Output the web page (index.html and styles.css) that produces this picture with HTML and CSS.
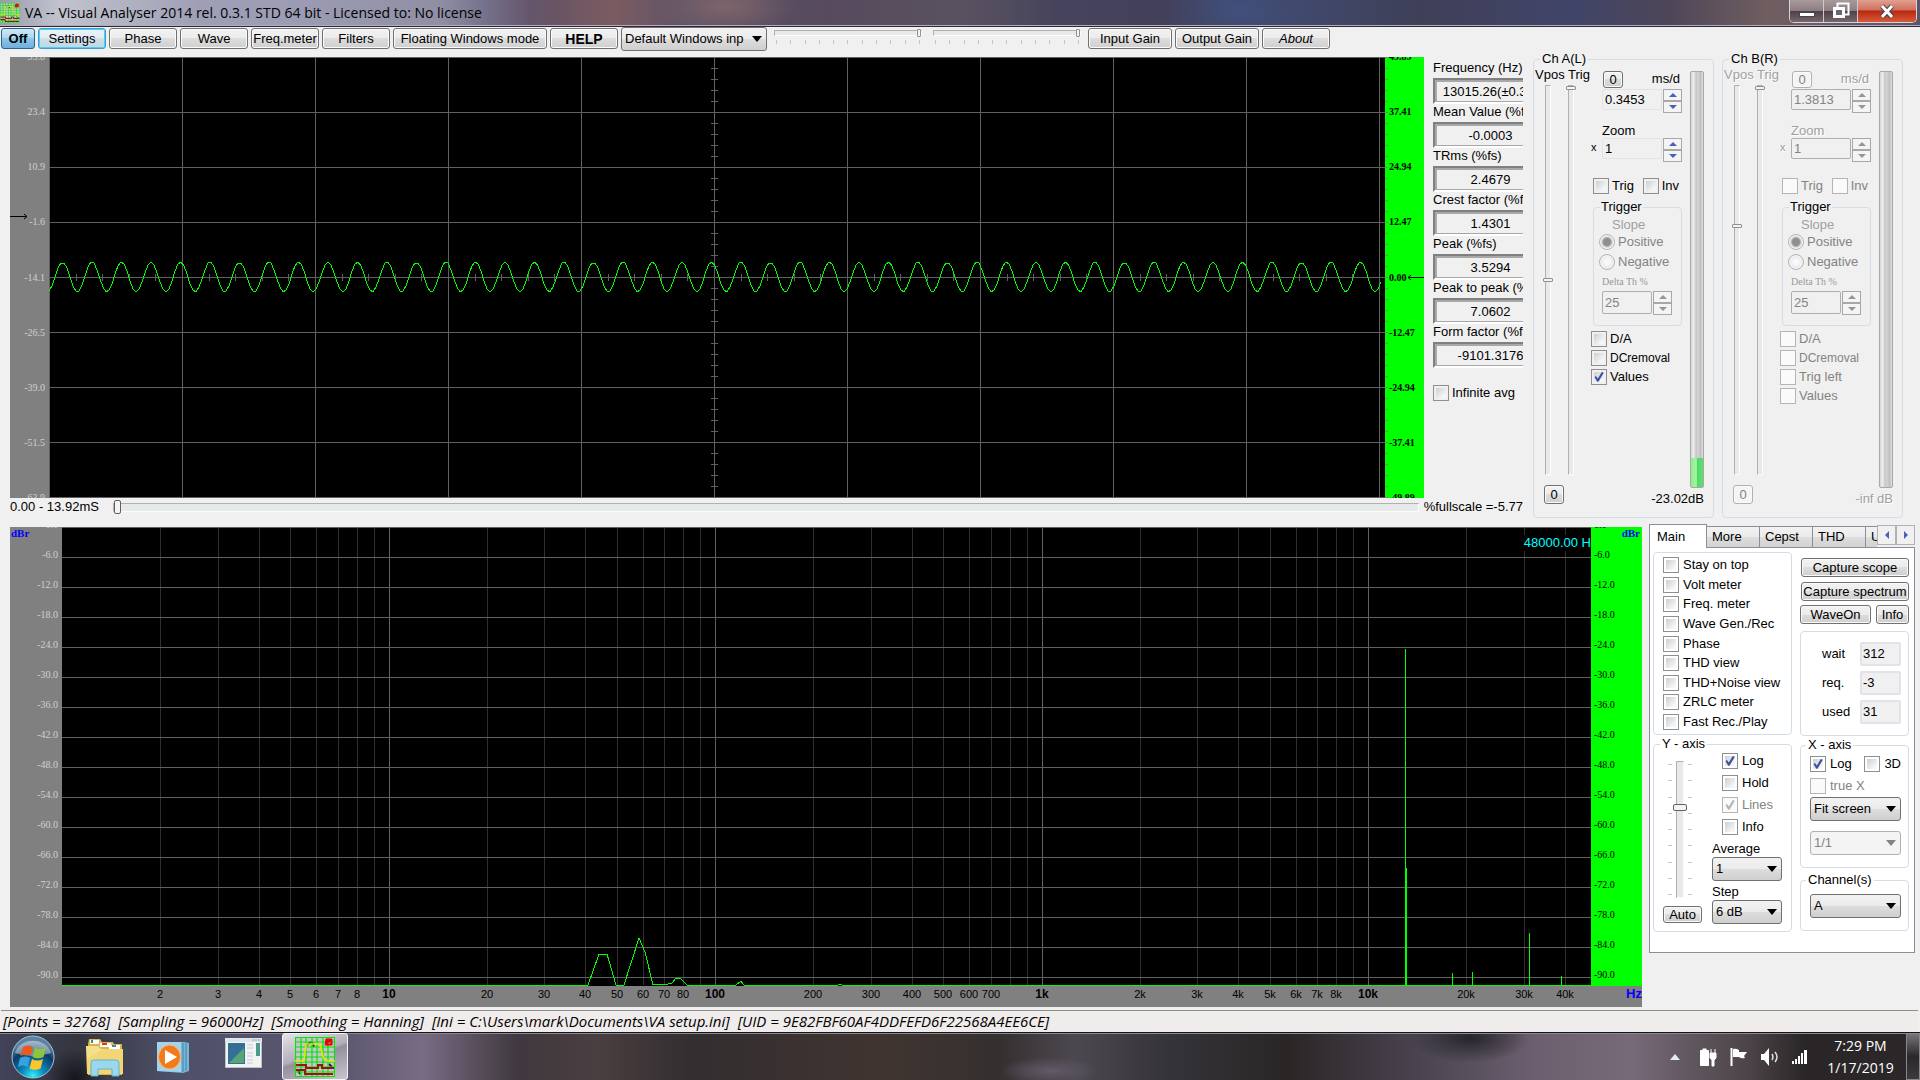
FILE: index.html
```html
<!DOCTYPE html>
<html lang="en">
<head>
    <meta charset="UTF-8">
    <meta name="viewport" content="width=device-width, initial-scale=1.0">
    <title>VA -- Visual Analyser 2014</title>
    <link rel="stylesheet" href="styles.css">
</head>
<body>
    <svg class="defs" width="0" height="0">
        <symbol id="va-icon" viewBox="0 0 40 40">
            <rect width="40" height="40" fill="#c8c4ce"/>
            <path d="M12 8l4-3M17 5l2 5M34 27l3 3M3 33l2 4" stroke="#123" stroke-width="2"/>
            <path d="M.5 0v40M6 0v40M11 0v40M17 0v40M22 0v40M28 0v40M33 0v40M39.5 0v40M0 .5h40M0 5h40M0 10h40M0 15h40M0 20h40M0 25h40M0 30h40M0 35h40M0 39.5h40" stroke="#00e800" stroke-width="1.2"/>
            <path d="M0 24h9l2-17h14l3 13 4 4h8" fill="none" stroke="#e6e600" stroke-width="1.6"/>
            <path d="M1 28h10v3h12v-3h4v3h12M1 33h9v4h28" fill="none" stroke="#a01010" stroke-width="2"/>
            <path d="M31 2h6v3h-4v3h-3zM32 8h5V5" fill="#e00" stroke="#e00"/>
        </symbol>
    </svg>

    <header class="titlebar">
        <svg class="app-icon"><use href="#va-icon"/></svg>
        <h1>VA -- Visual Analyser 2014 rel. 0.3.1 STD 64 bit - Licensed to: No license</h1>
        <div class="caption-buttons">
            <button aria-label="Minimize"><svg width="18" height="22"><rect x="1.5" y="12.500" width="15" height="4" fill="#fff" stroke="#445"/></svg></button>
            <button aria-label="Restore"><svg width="18" height="22"><path d="M5.500 3.500h11v11h-11z" fill="none" stroke="#fff" stroke-width="2"/><path d="M2.500 8.500h9v8h-9z" fill="#667" stroke="#fff" stroke-width="3"/></svg></button>
            <button class="close" aria-label="Close"><svg width="18" height="22"><path d="M4 6l10 11M14 6L4 17" stroke="#445" stroke-width="5"/><path d="M4 6l10 11M14 6L4 17" stroke="#fff" stroke-width="3"/></svg></button>
        </div>
    </header>

    <main>
        <div class="toolbar">
            <button class="off">Off</button>
            <button class="focused">Settings</button>
            <button>Phase</button>
            <button>Wave</button>
            <button>Freq.meter</button>
            <button>Filters</button>
            <button class="wide">Floating Windows mode</button>
            <button class="help">HELP</button>
            <span class="combo device"><select aria-label="Input device"><option>Default Windows input device</option></select></span>
            <div class="gain">
                <input type="range" value="100" aria-label="Input gain">
                <div class="ticks"><i></i><i></i><i></i><i></i><i></i><i></i><i></i><i></i><i></i><i></i><i></i></div>
            </div>
            <div class="gain">
                <input type="range" value="100" aria-label="Output gain">
                <div class="ticks"><i></i><i></i><i></i><i></i><i></i><i></i><i></i><i></i><i></i><i></i><i></i></div>
            </div>
            <button class="gain-button">Input Gain</button>
            <button class="gain-button">Output Gain</button>
            <button class="about">About</button>
        </div>

        <div class="upper">
            <div class="scope-area">
                <div class="scope">
                    <div class="scale left">
                        <ul id="scopeLeft"></ul>
                        <svg class="trigger-arrow" width="18" height="7"><path d="M0 3.500h17M14 1l3 2.500L14 6" fill="none" stroke="#000"/></svg>
                    </div>
                    <svg class="plot" id="scopePlot" viewBox="0 0 1336 441" preserveAspectRatio="none"></svg>
                    <div class="scale right">
                        <svg class="scale-ticks" id="scopeTicks" width="4" height="441"></svg>
                        <ul id="scopeRight"></ul>
                        <svg class="zero-arrow" width="17" height="7"><path d="M17 3.500H1M4 1L1 3.500 4 6" fill="none" stroke="#000"/></svg>
                    </div>
                </div>
                <div class="measures">
                    <label for="m1">Frequency (Hz)</label><output id="m1">13015.26(±0.36)</output>
                    <label for="m2">Mean Value (%fs)</label><output id="m2">-0.0003</output>
                    <label for="m3">TRms (%fs)</label><output id="m3">2.4679</output>
                    <label for="m4">Crest factor (%fs)</label><output id="m4">1.4301</output>
                    <label for="m5">Peak (%fs)</label><output id="m5">3.5294</output>
                    <label for="m6">Peak to peak (%fs)</label><output id="m6">7.0602</output>
                    <label for="m7">Form factor (%fs)</label><output id="m7">-9101.3176</output>
                    <label class="check"><input type="checkbox">Infinite avg</label>
                </div>
                <div class="time-row">
                    <label for="timePos">0.00 - 13.92mS</label>
                    <input type="range" id="timePos" value="0">
                    <span>%fullscale =-5.77</span>
                </div>
            </div>

            <fieldset class="channel">
                <legend>Ch A(L)</legend>
                <div class="channel-body">
                    <div class="positions">
                        <div class="caption">Vpos Trig</div>
                        <div class="sliders">
                            <input type="range" value="50" aria-label="Vpos A">
                            <input type="range" value="0" aria-label="Trig A">
                        </div>
                        <button class="zero">0</button>
                    </div>
                    <div class="settings">
                        <div class="columns">
                            <div class="controls">
                                <div class="line time-head"><button class="zero">0</button><label for="msA">ms/d</label></div>
                                <div class="line spin"><input type="text" id="msA" value="0.3453"><span class="updown"><button aria-label="Up"></button><button aria-label="Down"></button></span></div>
                                <label class="zoom-label" for="zoomA">Zoom</label>
                                <div class="line spin"><span class="times">x</span><input type="text" id="zoomA" value="1"><span class="updown"><button aria-label="Up"></button><button aria-label="Down"></button></span></div>
                                <div class="line pair">
                                    <label class="check"><input type="checkbox">Trig</label>
                                    <label class="check"><input type="checkbox">Inv</label>
                                </div>
                                <fieldset class="trigger">
                                    <legend>Trigger</legend>
                                    <div class="slope">Slope</div>
                                    <label class="check"><input type="radio" name="slopeA" checked disabled>Positive</label>
                                    <label class="check"><input type="radio" name="slopeA" disabled>Negative</label>
                                    <label class="delta" for="deltaA">Delta Th %</label>
                                    <div class="line spin"><input type="text" id="deltaA" value="25" disabled><span class="updown"><button aria-label="Up" disabled></button><button aria-label="Down" disabled></button></span></div>
                                </fieldset>
                                <div class="options">
                                    <label class="check"><input type="checkbox">D/A</label>
                                    <label class="check small"><input type="checkbox">DCremoval</label>
                                    <label class="check"><input type="checkbox" checked>Values</label>
                                </div>
                            </div>
                            <div class="level"><div class="level-fill" style="height: 7%"></div></div>
                        </div>
                        <div class="db">-23.02dB</div>
                    </div>
                </div>
            </fieldset>

            <fieldset class="channel inactive">
                <legend>Ch B(R)</legend>
                <div class="channel-body">
                    <div class="positions">
                        <div class="caption">Vpos Trig</div>
                        <div class="sliders">
                            <input type="range" value="36" aria-label="Vpos B" disabled>
                            <input type="range" value="0" aria-label="Trig B" disabled>
                        </div>
                        <button class="zero" disabled>0</button>
                    </div>
                    <div class="settings">
                        <div class="columns">
                            <div class="controls">
                                <div class="line time-head"><button class="zero" disabled>0</button><label for="msB">ms/d</label></div>
                                <div class="line spin"><input type="text" id="msB" value="1.3813" disabled><span class="updown"><button aria-label="Up" disabled></button><button aria-label="Down" disabled></button></span></div>
                                <label class="zoom-label" for="zoomB">Zoom</label>
                                <div class="line spin"><span class="times">x</span><input type="text" id="zoomB" value="1" disabled><span class="updown"><button aria-label="Up" disabled></button><button aria-label="Down" disabled></button></span></div>
                                <div class="line pair">
                                    <label class="check"><input type="checkbox" disabled>Trig</label>
                                    <label class="check"><input type="checkbox" disabled>Inv</label>
                                </div>
                                <fieldset class="trigger">
                                    <legend>Trigger</legend>
                                    <div class="slope">Slope</div>
                                    <label class="check"><input type="radio" name="slopeB" checked disabled>Positive</label>
                                    <label class="check"><input type="radio" name="slopeB" disabled>Negative</label>
                                    <label class="delta" for="deltaB">Delta Th %</label>
                                    <div class="line spin"><input type="text" id="deltaB" value="25" disabled><span class="updown"><button aria-label="Up" disabled></button><button aria-label="Down" disabled></button></span></div>
                                </fieldset>
                                <div class="options">
                                    <label class="check"><input type="checkbox" disabled>D/A</label>
                                    <label class="check small"><input type="checkbox" disabled>DCremoval</label>
                                    <label class="check"><input type="checkbox" disabled>Trig left</label>
                                    <label class="check"><input type="checkbox" disabled>Values</label>
                                </div>
                            </div>
                            <div class="level"></div>
                        </div>
                        <div class="db">-inf dB</div>
                    </div>
                </div>
            </fieldset>
        </div>

        <div class="lower">
            <div class="spectrum">
                <div class="scale left">
                    <ul id="specLeft"></ul>
                    <b class="unit">dBr</b>
                </div>
                <div class="spectrum-plot">
                    <svg class="plot" id="specPlot" viewBox="0 0 1529 459" preserveAspectRatio="none"></svg>
                    <span class="readout">48000.00 H</span>
                </div>
                <div class="scale right">
                    <ul id="specRight"></ul>
                    <b class="unit">dBr</b>
                </div>
                <div class="freq-axis">
                    <div class="freq-labels" id="freqLabels"></div>
                    <b>Hz</b>
                </div>
            </div>

            <div class="panel">
                <div class="tabs" role="tablist">
                    <button class="tab active" role="tab">Main</button>
                    <button class="tab" role="tab">More</button>
                    <button class="tab" role="tab">Cepst</button>
                    <button class="tab" role="tab">THD</button>
                    <button class="tab cut" role="tab">U</button>
                    <button class="scroll prev" aria-label="Previous tabs"></button>
                    <button class="scroll next" aria-label="Next tabs"></button>
                </div>
                <div class="page">
                    <div class="page-left">
                        <div class="box views">
                            <label class="check"><input type="checkbox">Stay on top</label>
                            <label class="check"><input type="checkbox">Volt meter</label>
                            <label class="check"><input type="checkbox">Freq. meter</label>
                            <label class="check"><input type="checkbox">Wave Gen./Rec</label>
                            <label class="check"><input type="checkbox">Phase</label>
                            <label class="check"><input type="checkbox">THD view</label>
                            <label class="check"><input type="checkbox">THD+Noise view</label>
                            <label class="check"><input type="checkbox">ZRLC meter</label>
                            <label class="check"><input type="checkbox">Fast Rec./Play</label>
                        </div>
                        <fieldset class="y-axis">
                            <legend>Y - axis</legend>
                            <div class="axis-body">
                                <div class="y-scale">
                                    <div class="y-slider">
                                        <div class="ticks"><i></i><i></i><i></i><i></i><i></i><i></i><i></i><i></i><i></i></div>
                                        <input type="range" value="33" aria-label="Y scale">
                                        <div class="ticks"><i></i><i></i><i></i><i></i><i></i><i></i><i></i><i></i><i></i></div>
                                    </div>
                                    <button>Auto</button>
                                </div>
                                <div class="y-options">
                                    <label class="check"><input type="checkbox" checked>Log</label>
                                    <label class="check"><input type="checkbox">Hold</label>
                                    <label class="check"><input type="checkbox" checked disabled>Lines</label>
                                    <label class="check"><input type="checkbox">Info</label>
                                    <label class="field" for="average">Average</label>
                                    <span class="combo"><select id="average"><option>1</option></select></span>
                                    <label class="field" for="step">Step</label>
                                    <span class="combo"><select id="step"><option>6 dB</option></select></span>
                                </div>
                            </div>
                        </fieldset>
                    </div>
                    <div class="page-right">
                        <button>Capture scope</button>
                        <button>Capture spectrum</button>
                        <div class="line split"><button>WaveOn</button><button>Info</button></div>
                        <div class="box counters">
                            <label for="wait">wait</label><input type="text" id="wait" value="312" readonly>
                            <label for="req">req.</label><input type="text" id="req" value="-3" readonly>
                            <label for="used">used</label><input type="text" id="used" value="31" readonly>
                        </div>
                        <fieldset class="x-axis">
                            <legend>X - axis</legend>
                            <div class="line pair">
                                <label class="check"><input type="checkbox" checked>Log</label>
                                <label class="check"><input type="checkbox">3D</label>
                            </div>
                            <label class="check"><input type="checkbox" disabled>true X</label>
                            <span class="combo"><select aria-label="Fit"><option>Fit screen</option></select></span>
                            <span class="combo disabled"><select aria-label="Ratio" disabled><option>1/1</option></select></span>
                        </fieldset>
                        <fieldset class="channels">
                            <legend>Channel(s)</legend>
                            <span class="combo"><select aria-label="Channel"><option>A</option></select></span>
                        </fieldset>
                    </div>
                </div>
            </div>
        </div>

        <footer class="status">
            <span>[Points = 32768]</span>
            <span>[Sampling = 96000Hz]</span>
            <span>[Smoothing = Hanning]</span>
            <span>[Ini = C:\Users\mark\Documents\VA setup.ini]</span>
            <span>[UID = 9E82FBF60AF4DDFEFD6F22568A4EE6CE]</span>
        </footer>
    </main>

    <nav class="taskbar">
        <button class="start" aria-label="Start">
            <svg width="44" height="44" viewBox="0 0 44 44">
                <defs>
                    <radialGradient id="orb" cx=".5" cy=".95" r=".8">
                        <stop offset="0" stop-color="#2ff0ff"/><stop offset=".35" stop-color="#0a86b8"/><stop offset=".75" stop-color="#0d3a66"/><stop offset="1" stop-color="#5c83a4"/>
                    </radialGradient>
                </defs>
                <circle cx="22" cy="22" r="21" fill="url(#orb)" stroke="#9fc3d6"/>
                <path d="M4 18a18.500 16 0 0 1 36 0q-18 6-36 0z" fill="#fff" opacity=".4"/>
                <path d="M12 12q5-3 10 0l-2.500 9q-5-3-10 0z" fill="#ea5a1c"/>
                <path d="M24 12.500q5 3 11 0l-2.500 9.500q-6 2.500-11 0z" fill="#8cc63e"/>
                <path d="M9 23q5-3 10 0l-2.500 9q-5-3-9.500 0z" fill="#3aa0e0"/>
                <path d="M21 24q5 3 11 0l-2.500 9.500q-6 2.500-11 0z" fill="#fdc72c"/>
            </svg>
        </button>
        <button class="task explorer" aria-label="Windows Explorer">
            <svg width="40" height="40" viewBox="0 0 40 40">
                <path d="M3 7l1-5h11l2 3h11l1 2h8v31H3z" fill="#d9b44a"/>
                <path d="M5 3h9v4H5zM15 6h11v4H15zM24 8h11v4H24z" fill="#fff"/>
                <path d="M6 3h2v3H6z" fill="#2a9a4a"/><path d="M17 6h5v2h-5z" fill="#d33"/><path d="M27 8h4v2h-4z" fill="#38c"/>
                <path d="M1 9h12l3 3h22v25H2z" fill="#f4e08a"/>
                <path d="M2 22L18 12h20v25H2z" fill="#efd26a" opacity=".7"/>
                <path d="M6 39V26q0-3 3-3h22q3 0 3 3v13h-7v-7H13v7z" fill="#9bd8ee" stroke="#5eb2d4"/>
            </svg>
        </button>
        <button class="task player" aria-label="Media Player">
            <svg width="34" height="34" viewBox="0 0 34 34">
                <path d="M1 2h27l5 1v28l-6 2L1 31z" fill="#79b6d8"/>
                <path d="M1 2h24v30L1 31z" fill="#a4d4ec"/>
                <path d="M27 3v29M30 3v28" stroke="#3f86b0"/>
                <ellipse cx="13.500" cy="17" rx="11" ry="12" fill="#f27a1a" stroke="#ffb777"/>
                <path d="M9 10l12 7-12 7z" fill="#fff"/>
            </svg>
        </button>
        <button class="task window" aria-label="Program">
            <svg width="38" height="32" viewBox="0 0 38 32">
                <path d="M.5.5h36v29H.5z" fill="#f2f4f4" stroke="#b9c4cc"/>
                <path d="M0 0h37v4H0z" fill="#dfe6ea"/><path d="M27 2h8" stroke="#8a99a5" stroke-dasharray="2 1"/>
                <path d="M3 5h17v21H3z" fill="#356f96"/><path d="M4 25L19 10v15z" fill="#56a577"/>
                <path d="M22 7h6M22 10h6M22 15h6M22 18h6M22 22h6M22 25h6" stroke="#c8ccd0"/>
                <path d="M31 5h4v13h-4z" fill="#4b9a8c"/>
            </svg>
        </button>
        <button class="task current" aria-label="Visual Analyser"><svg width="40" height="40"><use href="#va-icon"/></svg></button>
        <div class="tray">
            <svg width="10" height="6"><path d="M0 6l5-6 5 6z" fill="#e6edf4"/></svg>
            <svg width="20" height="20"><path d="M2.500 3.500h8v15h-8z" fill="#fff" stroke="#fff"/><path d="M4.500 1.500h4v2h-4z" fill="#fff"/><path d="M12 6h6v5l-2 2v6h-2v-6l-2-2zM13 2v4M17 2v4" fill="#fff" stroke="#fff"/></svg>
            <svg width="18" height="20"><path d="M1.500 1v18" stroke="#fff" stroke-width="2"/><path d="M3 2q3-1 6 1v2h8l-3 4 1 2q-4 1-6-1H3z" fill="#fff"/></svg>
            <svg width="20" height="20"><path d="M1 7h3l5-6v18l-5-6H1z" fill="#fff"/><path d="M12 7q2 3 0 6M15 5q4 5 0 10" fill="none" stroke="#ddd" stroke-width="1.500"/></svg>
            <svg width="16" height="16"><path d="M0 12h2v3H0zM3 10h2v5H3zM6 7h2v8H6zM9 4h2v11H9zM12 1h3v14h-3z" fill="#fff"/></svg>
        </div>
        <div class="clock"><span>7:29 PM</span><span>1/17/2019</span></div>
        <button class="show-desktop" aria-label="Show desktop"></button>
    </nav>

    <script src="script.js"></script>
</body>
</html>
```
FILE: styles.css
```css
* {
    box-sizing: border-box;
}
body {
    margin: 0;
    min-height: 100vh;
    display: flex;
    flex-direction: column;
    background: #f0f0f0;
    color: #000;
    font: 13px/16px "Liberation Sans", Arial, sans-serif;
}
.defs {
    position: absolute;
}
button, input, select {
    font: inherit;
    color: inherit;
    margin: 0;
}
ul {
    list-style: none;
    margin: 0;
    padding: 0;
}
fieldset {
    margin: 0;
    padding: 0;
    min-width: 0;
    border: 1px solid #d3dde6;
    border-radius: 4px;
}
legend {
    margin-left: 6px;
    padding: 0 2px;
}
.line {
    display: flex;
}

/* Title bar */
.titlebar {
    display: flex;
    align-items: center;
    height: 27px;
    border-bottom: 1px solid #2c2838;
    box-shadow: inset 0 -1px #b4acbc;
    background:
        linear-gradient(to right, rgba(200, 200, 210, 0.4) 0, rgba(225, 225, 230, 0.7) 60px, rgba(190, 190, 205, 0.55) 200px, rgba(190, 190, 200, 0.5) 440px, transparent 530px),
        radial-gradient(ellipse 70px 30px at 725px 6px, #80646a, transparent),
        radial-gradient(ellipse 80px 40px at 1240px 10px, #40507c, transparent),
        linear-gradient(to right, #7a7e96 0, #75779a 15%, #5c5878 25%, #6a5464 29%, #7a5c60 32%, #5c5268 36%, #564a5c 43%, #5a5260 50%, #46445c 55%, #42405a 62%, #40486a 68%, #3f4058 74%, #404468 82%, #4e4658 87%, #705e60 92%, #5a5668 100%);
}
.app-icon {
    width: 20px;
    height: 20px;
}
.titlebar h1 {
    flex: 1;
    margin: 0 0 0 5px;
    font: 14px/20px "Open Sans", "Noto Sans", sans-serif;
}
.caption-buttons {
    display: flex;
    align-self: flex-start;
    margin-right: 3px;
    border: 1px solid #d8d0dc;
    border-top: 0;
    border-radius: 0 0 5px 5px;
    overflow: hidden;
}
.caption-buttons button {
    width: 34px;
    height: 22px;
    padding: 0;
    border: 0;
    border-right: 1px solid #cfc8d0;
    background: linear-gradient(#a89a9c, #8a7c80 50%, #4c4048 50%, #75686c);
}
.caption-buttons .close {
    width: 58px;
    border: 0;
    background: linear-gradient(#e0a090, #d07060 45%, #b82810 50%, #d85a38);
}

/* Shared controls */
.toolbar button, .panel .page button, .zero {
    padding: 0;
    border: 1px solid #707070;
    border-radius: 3px;
    background: linear-gradient(#f2f2f2, #ebebeb 50%, #dddddd 50%, #cfcfcf);
    box-shadow: inset 0 0 0 1px #fafafa;
    white-space: nowrap;
}
button:disabled {
    color: #838383;
}
.zero:disabled {
    border-color: #adb2b5;
    background: #f4f4f4;
}
.check {
    display: flex;
    align-items: center;
    gap: 3px;
    height: 16px;
    white-space: nowrap;
}
.check input {
    appearance: none;
    flex: none;
    position: relative;
    width: 16px;
    height: 16px;
    border: 1px solid #8e8f8f;
    background: linear-gradient(135deg, #cbcfd5, #f6f6f6 80%) content-box;
    padding: 2px;
    background-color: #f4f4f4;
}
.check input[type="radio"] {
    border-radius: 50%;
    background: radial-gradient(#f8f8f8 40%, #dcdcdc) content-box;
}
.check input[type="radio"]:checked {
    background: radial-gradient(circle, #8e8e8e 35%, #dcdcdc 55%, #f4f4f4 65%);
}
.check input[type="checkbox"]:checked::after {
    content: "";
    position: absolute;
    inset: 2px;
    background: #3e53a0;
    clip-path: polygon(5% 50%, 20% 40%, 38% 65%, 78% 0, 98% 8%, 45% 98%, 32% 98%);
}
.check input:disabled {
    border-color: #b4b4b4;
}
.check input[type="checkbox"]:disabled {
    background: #fafafa;
}
.check input[type="checkbox"]:disabled::after {
    background: #b4b4b4;
}
.check:has(:disabled) {
    color: #838383;
}
.combo {
    position: relative;
    display: block;
    height: 24px;
}
.combo::after {
    content: "";
    position: absolute;
    right: 5px;
    top: 9px;
    border: 5px solid transparent;
    border-top: 6px solid #000;
    border-bottom: 0;
    pointer-events: none;
}
.combo select {
    appearance: none;
    display: block;
    width: 100%;
    height: 100%;
    padding: 0 20px 0 3px;
    border: 1px solid #707070;
    border-radius: 3px;
    background: linear-gradient(#f2f2f2, #ebebeb 50%, #dddddd 50%, #cfcfcf);
}
.combo.disabled::after {
    border-top-color: #838383;
}
.combo select:disabled {
    color: #838383;
    border-color: #adb2b5;
    background: #f4f4f4;
    opacity: 1;
}
input[type="text"] {
    min-width: 0;
    padding: 0 2px;
    border: 1px solid #e2e3ea;
    border-radius: 2px;
    background: #f0f0f0;
}
input[type="text"]:disabled {
    color: #838383;
    border-color: #afafaf;
}
input[type="range"] {
    appearance: none;
    display: block;
    background: none;
}
input[type="range"]::-webkit-slider-runnable-track {
    height: 6px;
    background: #e7eaea;
    border: 1px solid #fcfcfc;
    border-top-color: #b0b0b0;
    border-left-color: #b0b0b0;
}
input[type="range"]::-webkit-slider-thumb {
    appearance: none;
    width: 4px;
    height: 8px;
    margin-top: -2px;
    border: 1px solid #909090;
    border-radius: 1px;
    background: #f4f4f4;
}

/* Toolbar */
.toolbar {
    display: flex;
    gap: 3px;
    height: 24px;
    padding: 1px 0 0 1px;
}
.toolbar button {
    width: 68px;
    height: 21px;
    overflow: hidden;
}
.toolbar .off {
    width: 34px;
    font-weight: bold;
    border-color: #2c628b;
    background: linear-gradient(#d0e8f6, #a9d5ee 50%, #8cc5e8 50%, #6eb0dc);
    box-shadow: none;
}
.toolbar .focused {
    border-color: #3c9fd0;
    background: linear-gradient(#eef4f7, #e0ecf2 50%, #d0dfe8 50%, #c4d6e0);
    box-shadow: inset 0 0 0 1px #48d0f8;
}
.toolbar .wide {
    width: 154px;
}
.toolbar .help {
    font-size: 14px;
    font-weight: bold;
}
.toolbar .device {
    width: 146px;
    margin-top: -1px;
}
.toolbar .device select {
    padding-right: 22px;
}
.toolbar .gain {
    width: 148px;
    margin: 1px 0 0 4px;
}
.toolbar .gain input {
    width: 100%;
    height: 8px;
}
.toolbar .ticks {
    display: flex;
    justify-content: space-between;
    margin: 3px 2px 0;
}
.toolbar .ticks i {
    width: 1px;
    height: 4px;
    background: #c4c4c4;
}
.toolbar .gain + .gain {
    margin-left: 8px;
}
.toolbar .gain-button {
    width: 84px;
}
.gain + .gain-button {
    margin-left: 4px;
}
.toolbar .about {
    font-style: italic;
}

/* Oscilloscope */
.upper {
    display: flex;
    align-items: flex-start;
    padding: 0 17px 6px 10px;
}
.scope-area {
    flex: 1;
    display: grid;
    grid-template-columns: 1fr 99px;
    padding-top: 6px;
    margin-right: 10px;
    min-width: 0;
}
.scope {
    display: grid;
    grid-template-columns: 39px 1fr 39px;
    height: 441px;
}
.plot {
    display: block;
    width: 100%;
    height: 100%;
    background: #000;
}
.plot path {
    fill: none;
    vector-effect: non-scaling-stroke;
    shape-rendering: crispEdges;
}
.plot .major {
    stroke: #606060;
}
.plot .minor {
    stroke: #303030;
}
.plot .trace {
    stroke: #00ff00;
}
.scale {
    position: relative;
    overflow: hidden;
    font: 10px/10px "Liberation Serif", "Times New Roman", serif;
}
.scale.left {
    background: #808080;
    color: #d0d0d0;
    text-align: right;
    padding-right: 4px;
}
.scale.right {
    background: #00ff00;
    padding-left: 4px;
}
.scope .scale ul {
    display: flex;
    flex-direction: column;
    justify-content: space-between;
    height: 451px;
    margin-top: -5px;
}
.scope .scale.right {
    font-weight: bold;
}
.trigger-arrow {
    position: absolute;
    left: 0;
    top: 156px;
}
.zero-arrow {
    position: absolute;
    right: 0;
    top: 217px;
}
.scale-ticks {
    position: absolute;
    left: 0;
    top: 0;
}
.measures {
    overflow: hidden;
    padding: 3px 0 0 9px;
}
.measures > label, .measures > output {
    display: block;
    white-space: nowrap;
}
.measures > label {
    height: 18px;
}
.measures output {
    width: 115px;
    height: 26px;
    padding: 2px 0;
    border: 2px solid #fff;
    border-top-color: #808080;
    border-left-color: #808080;
    box-shadow: inset 2px 2px #a8a8a8, inset 0 -1px #a8a8a8;
    text-align: center;
    line-height: 19px;
}
.measures > .check {
    display: flex;
    height: 16px;
    margin-top: 17px;
}
.time-row {
    grid-column: 1 / 3;
    display: flex;
    align-items: center;
    height: 18px;
}
.time-row input {
    flex: 1;
    height: 14px;
    margin: 0 5px 0 14px;
}
.time-row input::-webkit-slider-runnable-track {
    height: 9px;
}
.time-row input::-webkit-slider-thumb {
    width: 7px;
    height: 14px;
    margin-top: -4px;
    border-color: #606060;
    border-radius: 2px;
}

/* Channel boxes */
.channel {
    width: 181px;
    height: 467px;
}
.channel + .channel {
    margin-left: 8px;
}
.channel-body {
    display: flex;
}
.positions {
    width: 57px;
}
.positions .caption {
    padding-left: 1px;
    white-space: nowrap;
}
.sliders {
    display: flex;
    gap: 15px;
    margin: 2px 0 0 10px;
}
.sliders input {
    writing-mode: vertical-lr;
    width: 8px;
    height: 390px;
}
.sliders input::-webkit-slider-runnable-track {
    width: 6px;
    height: 100%;
}
.sliders input::-webkit-slider-thumb {
    width: 10px;
    height: 4px;
    margin: 0 0 0 -3px;
}
.zero {
    width: 20px;
    height: 17px;
    line-height: 14px;
}
.positions .zero {
    height: 19px;
    margin: 10px 0 0 10px;
}
.settings {
    flex: 1;
    margin-right: 9px;
}
.columns {
    display: flex;
    justify-content: space-between;
    padding-top: 4px;
    height: 421px;
}
.controls {
    width: 91px;
}
.level {
    display: flex;
    align-items: flex-end;
    width: 14px;
    border: 1px solid #a8a8a8;
    border-radius: 2px;
    background: linear-gradient(to right, #d4d4d4, #efefef 20%, #c4c4c4 45%, #d8d8d8 50%, #c0c0c0 80%, #e0e0e0);
}
.level-fill {
    width: 100%;
    background: linear-gradient(to right, #8af08a, #a8f4a0 45%, #50d868 50%, #5ce070);
}
.db {
    margin-top: 3px;
    text-align: right;
    white-space: nowrap;
}
.time-head {
    justify-content: space-between;
    padding: 0 2px 0 12px;
    line-height: 16px;
}
.spin {
    justify-content: flex-end;
    margin-top: 1px;
}
.spin input {
    width: 60px;
    height: 21px;
}
.times {
    flex: 1;
    font-size: 11px;
    line-height: 18px;
}
.updown {
    display: flex;
    flex-direction: column;
    width: 20px;
    height: 24px;
    padding-left: 1px;
}
.updown button {
    flex: 1;
    display: flex;
    align-items: center;
    justify-content: center;
    padding: 0;
    border: 1px solid #a8a8a8;
    background: #f4f4f4;
}
.updown button::before {
    content: "";
    border: 4px solid transparent;
    border-top: 0;
    border-bottom: 4px solid #4a60b8;
}
.updown button + button::before {
    border-top: 4px solid #4a60b8;
    border-bottom: 0;
}
.updown button:disabled::before {
    border-top-color: #969696;
    border-bottom-color: #969696;
}
.zoom-label {
    display: block;
    margin: 10px 0 -2px 11px;
}
.pair {
    justify-content: space-between;
}
.controls .pair {
    margin-top: 16px;
    padding: 0 3px 0 2px;
}
.trigger {
    width: 89px;
    height: 127px;
    margin: 5px 0 5px 2px;
}
.trigger legend {
    padding: 0 1px;
}
.trigger .slope {
    padding: 2px 0 0 18px;
    color: #a0a0a0;
}
.trigger .check {
    margin: 1px 0 4px 5px;
}
.trigger .delta {
    display: block;
    margin: 6px 0 0 8px;
    color: #989898;
    font: 10px/12px "Liberation Serif", "Times New Roman", serif;
}
.trigger .spin {
    margin: 3px 9px 0 0;
}
.trigger .spin input {
    width: 50px;
    height: 23px;
}
.options .check {
    margin-bottom: 3px;
}
.small {
    font-size: 12px;
}
.inactive .caption, .inactive .time-head, .inactive .zoom-label, .inactive .times, .inactive .db {
    color: #a0a0a0;
    text-shadow: 1px 1px #fff;
}

/* Spectrum */
.lower {
    display: flex;
    align-items: flex-start;
    padding: 0 4px 0 10px;
}
.spectrum {
    flex: 1;
    display: grid;
    grid-template-columns: 52px 1fr 51px;
    grid-template-rows: 459px 21px;
    margin: 3px 7px 0 0;
    min-width: 0;
}
.spectrum .scale ul {
    margin-top: -17px;
}
.spectrum .scale li {
    line-height: 30px;
}
.spectrum .scale.right {
    padding-left: 3px;
}
.unit {
    position: absolute;
    top: 1px;
    left: 1px;
    color: #0000ff;
    font-size: 11px;
}
.scale.right .unit {
    left: auto;
    right: 2px;
}
.spectrum-plot {
    position: relative;
    overflow: hidden;
}
.readout {
    position: absolute;
    top: 8px;
    right: 0;
    color: #00ffff;
    background: #000;
}
.freq-axis {
    grid-column: 1 / 4;
    position: relative;
    padding: 0 51px 0 52px;
    background: #808080;
}
.freq-labels {
    position: relative;
    height: 100%;
    font-size: 11px;
}
.freq-labels span {
    position: absolute;
    transform: translateX(-50%);
}
.freq-labels .decade {
    font-size: 12px;
    font-weight: bold;
}
.freq-axis b {
    position: absolute;
    right: 0;
    top: 0;
    color: #0000ff;
}

/* Tabbed panel */
.panel {
    width: 267px;
}
.tabs {
    display: flex;
    align-items: flex-end;
    height: 24px;
    margin-bottom: -1px;
    position: relative;
}
.tab {
    width: 53px;
    height: 22px;
    padding: 0 0 0 5px;
    border: 1px solid #8c8c9a;
    border-left-width: 0;
    background: linear-gradient(#f2f2f2, #ebebeb 50%, #dddddd 50%, #d2d2d2);
    text-align: left;
}
.tab.active {
    width: 58px;
    height: 24px;
    padding-left: 7px;
    border-left-width: 1px;
    border-bottom: 0;
    background: #fff;
}
.tab.cut {
    width: 11px;
    border-right: 0;
    overflow: hidden;
}
.scroll {
    display: flex;
    align-items: center;
    justify-content: center;
    align-self: flex-start;
    width: 19px;
    height: 20px;
    margin-top: 1px;
    padding: 0;
    border: 1px solid #b0b0b8;
    background: #f0f0f0;
}
.scroll::before {
    content: "";
    border: 4px solid transparent;
}
.prev::before {
    border-left: 0;
    border-right-color: #4a60b8;
}
.next::before {
    border-right: 0;
    border-left-color: #4a60b8;
}
.page {
    display: flex;
    justify-content: space-between;
    width: 266px;
    padding: 4px 4px 20px 3px;
    border: 1px solid #8c8c9a;
    background: #fff;
}
.box {
    border: 1px solid #d3dde6;
    border-radius: 4px;
}
.page-left {
    width: 139px;
}
.page-right {
    width: 110px;
    display: flex;
    flex-direction: column;
    padding-top: 6px;
}
.views {
    display: flex;
    flex-direction: column;
    justify-content: space-between;
    height: 183px;
    padding: 4px 9px;
}
.page .check {
    gap: 4px;
}
.y-axis {
    height: 196px;
    margin-top: 1px;
}
.axis-body {
    display: flex;
    justify-content: space-between;
    padding: 0 9px 0 9px;
}
.y-scale {
    padding-top: 9px;
}
.y-slider {
    display: flex;
    height: 137px;
    padding-left: 5px;
}
.y-slider input {
    writing-mode: vertical-lr;
    width: 16px;
    height: 137px;
}
.y-slider input::-webkit-slider-runnable-track {
    width: 8px;
    height: 100%;
}
.y-slider input::-webkit-slider-thumb {
    width: 14px;
    height: 7px;
    margin: 0 0 0 -4px;
    border-color: #606060;
    border-radius: 2px;
}
.y-slider .ticks {
    display: flex;
    flex-direction: column;
    justify-content: space-between;
    padding: 3px 0;
}
.y-slider .ticks i {
    width: 4px;
    height: 1px;
    background: #c4c4c4;
}
.panel .y-scale button {
    width: 39px;
    height: 17px;
    margin-top: 8px;
    line-height: 14px;
}
.y-options {
    width: 70px;
}
.y-options .check {
    margin: 0 0 6px 10px;
}
.y-options .check:first-child {
    margin-top: 1px;
}
.field {
    display: block;
    margin-top: 3px;
    height: 16px;
}
.page-right > button {
    width: 108px;
    height: 19px;
    margin: 0 0 5px 1px;
    line-height: 16px;
}
.split {
    justify-content: space-between;
    margin: -1px 1px 7px 0;
}
.split button {
    width: 71px;
    height: 19px;
}
.split button + button {
    width: 33px;
}
.counters {
    display: grid;
    grid-template-columns: 38px 41px;
    justify-content: end;
    align-items: center;
    gap: 5px 0;
    height: 105px;
    width: 109px;
    padding: 10px 7px 0 0;
    align-content: start;
}
.counters input {
    height: 24px;
    padding: 0 1px 2px;
    border: 2px solid #e2e3ea;
}
.page-right fieldset {
    width: 109px;
    padding: 0 7px 0 9px;
}
.page-right legend {
    margin-left: -4px;
}
.x-axis {
    height: 131px;
    margin-top: 1px;
}
.x-axis .pair {
    margin: 3px 0 6px;
}
.x-axis .combo {
    margin: 3px 0 10px;
}
.channels {
    height: 59px;
    margin-top: 4px;
}
.channels .combo {
    margin-top: 6px;
}

/* Status bar */
main {
    flex: 1;
}
.status {
    display: flex;
    gap: 8px;
    height: 22px;
    margin: 3px 2px 0 1px;
    padding-left: 2px;
    border-top: 1px solid #8c8c8c;
    background: #f0eceb;
    font: italic 15px/20px "Open Sans", "Noto Sans", sans-serif;
    white-space: nowrap;
}

/* Taskbar */
.taskbar {
    display: flex;
    align-items: center;
    height: 48px;
    border-top: 1px solid #14141c;
    box-shadow: inset 0 1px #8a8890;
    color: #fff;
    background:
        radial-gradient(ellipse 50px 14px at 1050px 38px, #625a68, transparent),
        radial-gradient(ellipse 30px 30px at 75px 46px, #15151c, transparent),
        radial-gradient(ellipse 60px 25px at 1470px 5px, #26262a, transparent),
        linear-gradient(to right, #42435a 0, #34353f 4%, #4e5068 9%, #5c5870 18%, #786c84 22%, #3f383e 27%, #4a3e40 31%, #332e30 36%, #403430 46%, #34302f 52%, #4c4850 56%, #343338 61%, #2a2626 67%, #4a4450 74%, #6c6070 80%, #766a78 85%, #4c4448 91%, #2a2628 94%, #2c282a 100%);
}
.taskbar button {
    display: flex;
    align-items: center;
    justify-content: center;
    height: 47px;
    padding: 0;
    border: 0;
    background: none;
}
.start {
    width: 66px;
}
.task {
    width: 70px;
}
.taskbar .explorer {
    width: 78px;
}
.taskbar .player {
    width: 58px;
}
.taskbar .window {
    width: 80px;
    padding: 0 0 6px 4px;
}
.taskbar .current {
    width: 66px;
    border: 1px solid #f4f2f8;
    border-radius: 3px;
    background: linear-gradient(160deg, #e4e2ea, #b4aeba 45%, #96909e 50%, #cac4d0);
}
.tray {
    flex: 1;
    display: flex;
    align-items: center;
    justify-content: flex-end;
    gap: 12px;
    margin-right: 7px;
}
.tray svg:first-child {
    margin-right: 6px;
}
.clock {
    display: flex;
    flex-direction: column;
    align-items: center;
    width: 91px;
    font: 14px/22px "Open Sans", "Noto Sans", sans-serif;
}
.taskbar .show-desktop {
    width: 14px;
    border: 1px solid #8a868a;
    background: linear-gradient(#77747a, #2a282c 50%, #3c3a3e);
}
```
FILE: script.js
```javascript
const SVG = 'http://www.w3.org/2000/svg';

function addPath(svg, cls, d) {
    const path = document.createElementNS(SVG, 'path');
    path.setAttribute('class', cls);
    path.setAttribute('d', d);
    svg.appendChild(path);
}

function fillList(id, items) {
    document.getElementById(id).innerHTML = items.map(t => '<li>' + t + '</li>').join('');
}

// Oscilloscope
function drawScope() {
    const svg = document.getElementById('scopePlot');
    let grid = '';
    for (let i = 0; i <= 8; i++) grid += `M0 ${i * 55 + 0.5}H1336`;
    for (let i = 0; i <= 10; i++) grid += `M${i * 133 + 0.5} 0V441`;
    for (let y = 0; y <= 440; y += 11) grid += `M662 ${y + 0.5}h7`;
    for (let x = 0; x <= 1330; x += 26.6) grid += `M${Math.round(x) + 0.5} 217v7`;
    addPath(svg, 'major', grid);

    let wave = '';
    for (let x = 0; x <= 1333; x += 3) {
        const y = 220 - 15 * Math.cos((x - 13.5) / 29.5 * 2 * Math.PI);
        wave += (x ? 'L' : 'M') + x + ' ' + Math.round(y);
    }
    addPath(svg, 'trace', wave);

    let ticks = '';
    for (let y = 0; y <= 440; y += 11) ticks += `M0 ${y + 0.5}h3`;
    const side = document.getElementById('scopeTicks');
    addPath(side, 'tick', ticks);
    side.firstChild.setAttribute('stroke', '#808080');

    fillList('scopeLeft', ['35.8', '23.4', '10.9', '-1.6', '-14.1', '-26.5', '-39.0', '-51.5', '-63.9']);
    fillList('scopeRight', ['49.89', '37.41', '24.94', '12.47', '0.00', '-12.47', '-24.94', '-37.41', '-49.89']);
}

// Spectrum, logarithmic from 1 Hz to 48 kHz
const DECADE = 326.5;
const WIDTH = 1529;

function drawSpectrum() {
    const svg = document.getElementById('specPlot');
    const axis = document.getElementById('freqLabels');
    let major = '', minor = '';
    for (let p = 0; p < 5; p++) {
        for (let n = 1; n < 10; n++) {
            const f = n * Math.pow(10, p);
            if (f < 2 || f > 48000) continue;
            const x = Math.round(Math.log10(f) * DECADE);
            if (n === 1) major += `M${x + 0.5} 0V458`;
            else minor += `M${x + 0.5} 0V458`;
            if (n === 9 || (n === 8 && p === 2)) continue;
            const label = document.createElement('span');
            label.textContent = f >= 1000 ? f / 1000 + 'k' : f;
            if (n === 1) label.className = 'decade';
            label.style.left = x / WIDTH * 100 + '%';
            axis.appendChild(label);
        }
    }
    for (let i = 0; i <= 15; i++) major += `M0 ${i * 30 + 0.5}H1529`;
    addPath(svg, 'minor', minor);
    addPath(svg, 'major', major);

    const points = [[0, 458], [526, 458], [537, 427], [545, 427], [554, 458], [562, 458], [577, 411], [583, 425],
        [591, 458], [606, 457], [610, 456], [614, 451], [619, 452], [625, 458], [674, 458], [679, 454], [682, 458],
        [776, 458], [777, 457], [780, 458], [1529, 458]];
    addPath(svg, 'trace', 'M' + points.map(p => p.join(' ')).join('L'));

    const peaks = [[1343, 122], [1344, 341], [1390, 446], [1410, 445], [1467, 406], [1499, 449]];
    addPath(svg, 'trace', peaks.map(p => `M${p[0] + 0.5} ${p[1]}V458`).join(''));

    const levels = [];
    for (let db = 0; db <= 90; db += 6) levels.push(db ? '-' + db + '.0' : '0.0');
    fillList('specLeft', levels);
    fillList('specRight', levels);
}

drawScope();
drawSpectrum();
```
